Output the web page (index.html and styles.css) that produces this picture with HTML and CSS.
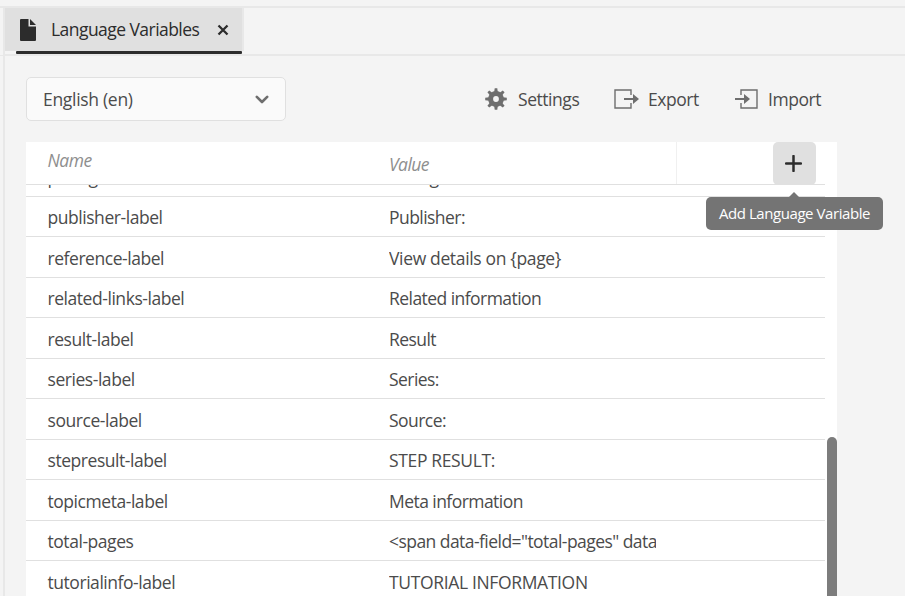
FILE: index.html
```html
<!DOCTYPE html>
<html lang="en">
<head>
<meta charset="utf-8">
<title>Language Variables</title>
<link rel="stylesheet" href="styles.css">
</head>
<body>
<div class="rail"></div>
<main class="editor">
  <header class="tabs">
    <div class="tab">
      <svg class="doc" width="16" height="22" viewBox="0 0 16 22"><path d="M0 1Q0 0 1 0H8.5V7.5H16V21Q16 22 15 22H1Q0 22 0 21Z"/><path d="M10 0L16 6H10Z"/></svg>
      <span class="tab-title">Language Variables</span>
      <svg class="close" width="12" height="12" viewBox="0 0 12 12"><path d="M1.5 1.5L10.5 10.5M10.5 1.5L1.5 10.5"/></svg>
    </div>
  </header>
  <section class="content">
    <div class="toolbar">
      <div class="select"><span class="select-text">English (en)</span>
        <svg width="14" height="9" viewBox="0 0 14 9"><path d="M1.8 1.8L7 7L12.2 1.8"/></svg>
      </div>
      <div class="action settings">
        <svg width="22" height="22" viewBox="-11 -11 22 22"><g id="teeth"><path id="t" d="M-1.8 -7L-1.3 -10.8H1.3L1.8 -7Z"/><use href="#t" transform="rotate(45)"/><use href="#t" transform="rotate(90)"/><use href="#t" transform="rotate(135)"/></g><use href="#teeth" transform="rotate(180)"/><circle class="gear-ring" r="5.4"/></svg>
        <span>Settings</span>
      </div>
      <div class="action export">
        <svg width="26" height="20" viewBox="0 0 26 20"><path class="frame" d="M17 6V1H1V19H17V14"/><path class="shaft" d="M10 10H20"/><path d="M19 5L25 10L19 15Z"/></svg>
        <span>Export</span>
      </div>
      <div class="action import">
        <svg width="23" height="20" viewBox="0 0 23 20"><path class="frame" d="M6 6V1H22V19H6V14"/><path class="shaft" d="M0 10H10"/><path d="M9 5L15 10L9 15Z"/></svg>
        <span>Import</span>
      </div>
    </div>
    <div class="table">
      <div class="head">
        <div class="name">Name</div><div class="value">Value</div>
        <div class="add-cell">
          <div class="add"><svg width="17" height="17" viewBox="0 0 17 17"><path d="M8.5 1V16M1 8.5H16"/></svg>
            <div class="tooltip"><span>Add Language Variable</span></div>
          </div>
        </div>
      </div>
      <div class="body">
        <div class="rows">
          <div class="row"><div class="name">prolog-label</div><div class="value">Prolog:</div></div>
          <div class="row"><div class="name">publisher-label</div><div class="value">Publisher:</div></div>
          <div class="row"><div class="name">reference-label</div><div class="value wide">View details on {page}</div></div>
          <div class="row"><div class="name">related-links-label</div><div class="value">Related information</div></div>
          <div class="row"><div class="name">result-label</div><div class="value">Result</div></div>
          <div class="row"><div class="name">series-label</div><div class="value">Series:</div></div>
          <div class="row"><div class="name">source-label</div><div class="value">Source:</div></div>
          <div class="row"><div class="name">stepresult-label</div><div class="value wide">STEP RESULT:</div></div>
          <div class="row"><div class="name">topicmeta-label</div><div class="value">Meta information</div></div>
          <div class="row"><div class="name">total-pages</div><div class="value">&lt;span data-field="total-pages" data-format="decimal"&gt;</div></div>
          <div class="row"><div class="name">tutorialinfo-label</div><div class="value wide">TUTORIAL INFORMATION</div></div>
        </div>
        <div class="scrollbar"></div>
      </div>
    </div>
  </section>
</main>
</body>
</html>
```
FILE: styles.css
```css
* { box-sizing: border-box; }
body {
  margin: 0;
  height: 596px;
  padding-top: 6px;
  display: flex;
  overflow: hidden;
  background: #f4f4f4;
  color: #4b4b4b;
  font: 17.5px/24px "Open Sans", sans-serif;
  letter-spacing: -0.55px;
  white-space: nowrap;
}
svg { display: block; flex: none; }
.rail { width: 3px; height: 50px; border-top: 2px solid #e8e8e8; border-bottom: 1px solid #e8e8e8; }
.editor { flex: 1; min-width: 0; border-top: 2px solid #e8e8e8; }
.tabs { height: 48px; border-left: 2px solid #e8e8e8; border-bottom: 2px solid #e8e8e8; }
.tab {
  position: relative;
  width: 239px;
  height: 43px;
  padding-left: 15px;
  display: flex;
  align-items: center;
  background: #e0e0e0;
  border-right: 2px solid #e8e8e8;
  color: #2c2c2c;
}
.tab::after { content: ""; position: absolute; left: 11px; top: 43px; width: 226px; height: 3px; border-radius: 1px; background: #2c2c2c; }
.doc { fill: #2c2c2c; }
.tab-title { width: 166px; margin-left: 15px; padding-bottom: 2px; }
.close { fill: none; stroke: #2c2c2c; stroke-width: 2.3; }
.content { height: 540px; padding: 21px 0 0 21px; border-left: 2px solid #e8e8e8; }
.toolbar { height: 65px; display: flex; align-items: flex-start; letter-spacing: -0.45px; }
.toolbar span { padding-bottom: 1px; }
.select {
  width: 260px;
  height: 44px;
  padding: 0 16px;
  display: flex;
  align-items: center;
  justify-content: space-between;
  background: #fafafa;
  border: 1px solid #e0e0e0;
  border-radius: 5px;
}
.select-text { letter-spacing: -0.3px; }
.select svg { fill: none; stroke: #6e6e6e; stroke-width: 2.6; stroke-linecap: round; stroke-linejoin: round; }
.action { height: 44px; display: flex; align-items: center; fill: #6e6e6e; }
.settings { width: 129px; margin-left: 199px; gap: 11px; }
.export { width: 121px; gap: 8px; }
.import { gap: 10px; }
.gear-ring { fill: none; stroke: #6e6e6e; stroke-width: 5; }
.frame { fill: none; stroke: #6e6e6e; stroke-width: 1.4; }
.shaft { stroke: #6e6e6e; stroke-width: 2; }
.table { width: 811px; height: 454px; background: #fff; }
.head { display: flex; width: 799px; height: 43px; border-bottom: 1px solid #e0e0e0; color: #8e8e8e; font-style: italic; }
.name { width: 363px; padding-left: 21.5px; letter-spacing: -0.45px; }
.value { width: 267px; overflow: hidden; }
.wide { letter-spacing: -0.35px; }
.head .name { padding-top: 6px; }
.head .value { width: 288px; padding-top: 10px; border-right: 1px solid #f0f0f0; }
.add-cell { padding-left: 96px; }
.add { position: relative; width: 43px; height: 43px; padding: 13px 12px; border-radius: 5px; background: #e0e0e0; }
.add svg { stroke: #2c2c2c; stroke-width: 2.5; stroke-linecap: round; }
.tooltip {
  position: absolute;
  left: -67px;
  top: 55px;
  width: 177px;
  height: 33px;
  border-radius: 5px;
  background: #747474;
  color: #fff;
  font-size: 15px;
  letter-spacing: -0.43px;
  line-height: 33px;
  font-style: normal;
  text-align: center;
}
.tooltip::before { content: ""; position: absolute; left: 83px; top: -5px; border: 5px solid transparent; border-top: 0; border-bottom-color: #747474; }
.body { display: flex; height: 411px; overflow: hidden; }
.rows { width: 799px; margin-top: -28.75px; }
.row { display: flex; height: 40.5px; padding-top: 8.25px; border-bottom: 1px solid #e0e0e0; }
.scrollbar { width: 10px; height: 180px; margin: 252px 0 0 2px; border-radius: 5px; background: #7c7c7c; flex: none; }
```
